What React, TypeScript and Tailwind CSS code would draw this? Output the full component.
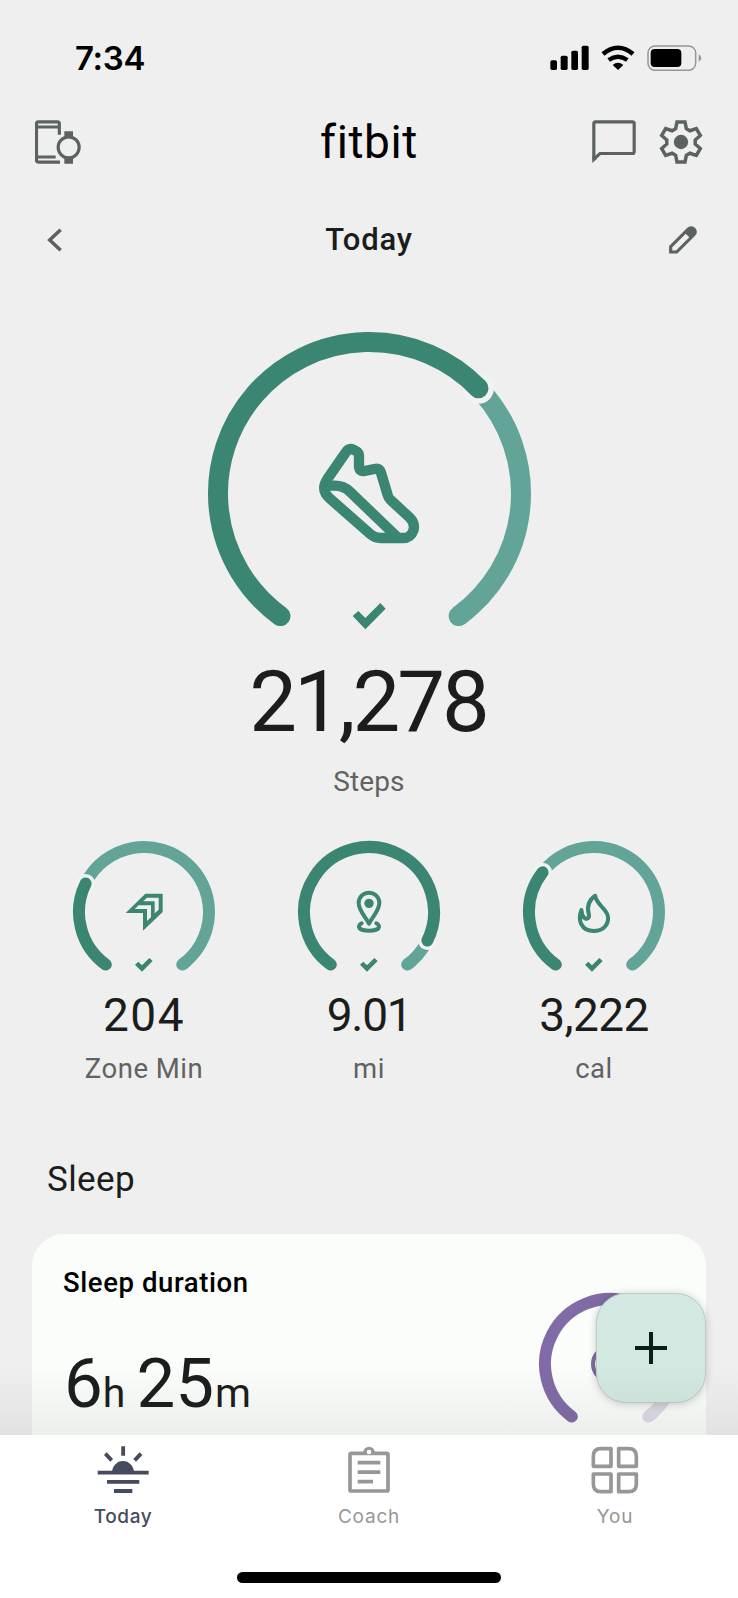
import type { ReactNode } from 'react';
import { clsx } from 'clsx';

const GREEN = '#3b8573';
const GREEN_LIGHT = '#62a598';

interface GaugeProps {
  size: number;
  height: number;
  stroke: number;
  gap: number;
  end: number;
  color?: string;
  track?: string;
  bg?: string;
  children?: ReactNode;
}

// angle in degrees, clockwise from the top
function point(c: number, r: number, angle: number) {
  const a = (angle * Math.PI) / 180;
  return { x: c + r * Math.sin(a), y: c - r * Math.cos(a) };
}

function arc(c: number, r: number, from: number, to: number) {
  const p = point(c, r, from);
  const q = point(c, r, to);
  return `M${p.x} ${p.y}A${r} ${r} 0 ${to - from > 180 ? 1 : 0} 1 ${q.x} ${q.y}`;
}

function Gauge({ size, height, stroke, gap, end, color = GREEN, track = GREEN_LIGHT, bg = '#f1f2f2', children }: GaugeProps) {
  const c = size / 2;
  const r = c - 1 - stroke / 2;
  const tip = point(c, r, end);
  return (
    <svg width={size} height={height} viewBox={`0 0 ${size} ${height}`} fill="none" className="shrink-0">
      <path d={arc(c, r, end + 2, 144)} stroke={track} strokeWidth={stroke} />
      <path d={arc(c, r, 140, 144)} stroke={track} strokeWidth={stroke} strokeLinecap="round" />
      <circle cx={tip.x} cy={tip.y} r={stroke / 2 + gap} fill={bg} />
      <path d={arc(c, r, -144, end)} stroke={color} strokeWidth={stroke} strokeLinecap="round" />
      {children}
    </svg>
  );
}

function ShoeIcon() {
  return (
    <g transform="translate(-17 -12) scale(.33333)" stroke={GREEN} strokeWidth="31" strokeLinejoin="round">
      <path d="M412 480L466 402Q476 386 490 392L498 396Q507 401 507 412V440Q507 459 524 456L553 450Q568 447 573 461L593 528Q595 537 602 543L658 595C685 621 668 657 640 657H572Q555 657 542 646L420 539C400 521 397 503 412 480Z" />
      <path d="M404 500H434Q461 500 480 518L622 655" />
      <path d="M488 891L505 876L526 897L571 852L587 869L526 931Z" fill={GREEN} stroke="none" />
    </g>
  );
}

function ZoneIcon() {
  return (
    <g transform="translate(-22 -20) scale(.33333)" fill={GREEN}>
      <path fillRule="evenodd" d="M227 279L286 221H338V276L279 332V279ZM280 244H314V280L326 269V233H291ZM254 267H291V303L303 292V256H266Z" />
    </g>
  );
}

function PinIcon() {
  return (
    <g transform="translate(-247 -20) scale(.33333)" stroke={GREEN} strokeWidth="12" strokeLinecap="round" strokeLinejoin="round">
      <path d="M957 311C948 292 926 272 926 249A31 31 0 0 1 988 249C988 272 966 292 957 311Z" />
      <path d="M935 310C919 319 926 332 957 332C988 332 995 319 979 310" />
      <circle cx="957" cy="250" r="14" fill={GREEN} stroke="none" />
    </g>
  );
}

function FlameIcon() {
  return (
    <g transform="translate(-152.2 -20) scale(.33333)" stroke={GREEN} strokeWidth="12" strokeLinejoin="round">
      <path d="M676 227C656 241 651 260 657 283C660 294 651 300 644 294C637 288 635 278 635 270C623 300 634 333 672 333C700 333 715 315 715 294C715 266 681 258 676 227Z" />
    </g>
  );
}

function CheckMark() {
  return (
    <g transform="translate(-22 -20) scale(.33333)">
      <path d="M255 434L265 425L276 436L298 414L308 423L276 455Z" fill={GREEN} />
    </g>
  );
}

function DevicesIcon() {
  return (
    <svg width="46" height="44" viewBox="106 299 138 132" fill="none" stroke="#5b625f" strokeWidth="9.5">
      <path d="M179 343V310Q179 304.500 173 304.500H116Q110.500 304.500 110.500 310V420Q110.500 425.500 116 425.500H181M111 320H179M111 410H168" />
      <circle cx="207" cy="381" r="41" fill="#efefef" stroke="none" />
      <circle cx="207" cy="381" r="31.500" />
      <path d="M194 333H220V352H194ZM194 410H220V430H194Z" fill="#5b625f" stroke="none" />
    </svg>
  );
}

function ChatIcon() {
  return (
    <svg width="44" height="44" viewBox="671 299 132 132" fill="none" stroke="#5b625f" strokeWidth="9.5">
      <path d="M676.500 418V310Q676.500 304.500 682 304.500H792Q797.500 304.500 797.500 310V394Q797.500 399.500 792 399.500H695L677 416" />
      <path d="M672 405V428L686 415Z" fill="#5b625f" stroke="none" />
    </svg>
  );
}

function GearIcon() {
  const tooth = [[-16, -40], [-12, -60], [12, -60], [16, -40]];
  const points = [0, 60, 120, 180, 240, 300].flatMap((deg) => {
    const a = (deg * Math.PI) / 180;
    return tooth.map(([x, y]) => `${x * Math.cos(a) - y * Math.sin(a)},${x * Math.sin(a) + y * Math.cos(a)}`);
  });
  return (
    <svg width="44" height="44" viewBox="-66 -66 132 132" fill="none">
      <polygon points={points.join(' ')} stroke="#5b625f" strokeWidth="10.5" />
      <circle r="21.5" fill="#5b625f" />
    </svg>
  );
}

function StatusIcons() {
  return (
    <div className="flex items-center">
      <svg width="39" height="26" viewBox="548 76 117 78">
        <rect x="549" y="122" width="20" height="29" rx="5" />
        <rect x="580" y="108" width="21" height="43" rx="5" />
        <rect x="612" y="93" width="20" height="58" rx="5" />
        <rect x="643" y="78" width="21" height="73" rx="5" />
      </svg>
      <svg width="34" height="26" viewBox="700 76 102 78" className="ml-[11.500px]" fill="none" stroke="#000" strokeWidth="13.5">
        <path d="M706 103Q727 84 751 84Q775 84 796 103" />
        <path d="M723 121Q751 102 779 121" />
        <path d="M751 151L735 136Q751 122 767 136Z" fill="#000" stroke="none" />
      </svg>
      <svg width="55" height="26" viewBox="838 75 165 78" className="ml-[12px]">
        <rect x="841" y="78" width="143" height="73" rx="21" fill="none" stroke="#979797" strokeWidth="4.500" />
        <rect x="849" y="87" width="92" height="54" rx="12" />
        <path d="M993 103Q1001 108 1001 114Q1001 120 993 125Z" fill="#979797" />
      </svg>
    </div>
  );
}

const metrics = [
  { value: '204', label: 'Zone Min', end: -64, icon: <ZoneIcon />, tracking: 'tracking-[1.5px]' },
  { value: '9.01', label: 'mi', end: 116, icon: <PinIcon />, tracking: 'tracking-[-1.3px]' },
  { value: '3,222', label: 'cal', end: -52.4, icon: <FlameIcon />, tracking: 'tracking-[-0.6px]' },
];

const tabs = [
  {
    label: 'Today',
    active: true,
    icon: (
      <svg width="52" height="48" viewBox="109 46 156 144" fill="none" stroke="#454b5c" strokeWidth="11.500">
        <path d="M187.500 47V75M134 69L153 89M241 69L222 89M111 126H264M139 153.500H236M160 181H215" />
        <path d="M154 126A33 35 0 0 1 220 126Z" fill="#454b5c" stroke="none" />
      </svg>
    ),
  },
  {
    label: 'Coach',
    active: false,
    icon: (
      <svg width="44" height="48" viewBox="860 46 132 144" fill="none" stroke="#979797" strokeWidth="11">
        <rect x="869" y="68" width="114" height="113" rx="4" />
        <path d="M892 96H960M892 124.500H960M892 153H938" />
        <path d="M909 65A17 17 0 0 1 943 65V72H909Z" fill="#979797" stroke="none" />
        <circle cx="926" cy="64" r="7" fill="#fff" stroke="none" />
      </svg>
    ),
  },
  {
    label: 'You',
    active: false,
    icon: (
      <svg width="48" height="48" viewBox="573 51 144 144" fill="none" stroke="#979797" strokeWidth="11" strokeLinejoin="round">
        <path d="M633 59V112H580V82Q580 59 603 59Z" />
        <path d="M656 59V112H709V82Q709 59 686 59Z" />
        <path d="M633 188V135H580V165Q580 188 603 188Z" />
        <path d="M656 188V135H709V165Q709 188 686 188Z" />
      </svg>
    ),
  },
];

export default function App() {
  return (
    <div className="relative flex h-[1598px] w-[738px] flex-col overflow-hidden bg-[#efefef] font-['Roboto',sans-serif] text-[#1b1d1c]">
      <header>
        <div className="mt-[38px] flex h-10 items-center justify-between pr-[36.500px] pl-[75px]">
          <span className="font-['Inter',sans-serif] text-[33px] leading-10 font-semibold tracking-[-0.3px] text-black">7:34</span>
          <StatusIcons />
        </div>
        <div className="mt-[38px] grid h-[52px] grid-cols-[1fr_auto_1fr] items-center px-[35px]">
          <DevicesIcon />
          <h1 className="text-[46px] leading-[52px] font-normal tracking-[0.6px] text-black">fitbit</h1>
          <div className="flex justify-end gap-[23px]">
            <ChatIcon />
            <GearIcon />
          </div>
        </div>
        <div className="mt-[52px] grid h-10 grid-cols-[1fr_auto_1fr] items-center px-10">
          <svg width="15" height="24" viewBox="144 624 45 72" fill="none" stroke="#5b625f" strokeWidth="10.5" className="ml-[7px]">
            <path d="M185 629L152 660L185 691" />
          </svg>
          <h2 className="text-[31px] leading-10 font-medium tracking-[0.8px]">Today</h2>
          <svg width="30" height="30" viewBox="901 617 90 90" fill="none" stroke="#5b625f" strokeWidth="9.5" className="justify-self-end">
            <path d="M909 698V682L962 629Q972 622 980 630Q986 639 978 647L927 698Z" />
            <path d="M951 640L962 629Q972 622 980 630Q986 639 978 647L968 657Z" fill="#5b625f" stroke="none" />
          </svg>
        </div>
      </header>

      <section className="mt-[71px] flex flex-col items-center">
        <Gauge size={325} height={300} stroke={20} gap={5.5} end={46}>
          <ShoeIcon />
        </Gauge>
        <div className="mt-[25.500px] ml-[-2px] h-[90px] text-[85px] leading-[90px] tracking-[-3px]">21,278</div>
        <div className="mt-[15px] h-10 text-[28px] leading-10 tracking-[0.1px] text-[#5f6361]">Steps</div>
      </section>

      <section className="mt-[38.500px] grid grid-cols-3 px-[31.500px]">
        {metrics.map((m) => (
          <div key={m.label} className="flex flex-col items-center">
            <Gauge size={144} height={134} stroke={12} gap={3.5} end={m.end}>
              {m.icon}
              <CheckMark />
            </Gauge>
            <div className={clsx('mt-4 h-[50px] text-[46px] leading-[50px]', m.tracking)}>{m.value}</div>
            <div className="mt-[11.500px] h-[34px] text-[27.500px] leading-[34px] tracking-[0.5px] text-[#5f6361]">{m.label}</div>
          </div>
        ))}
      </section>

      <h3 className="mt-[74px] ml-[47px] h-10 text-[35px] leading-10 tracking-[0.4px]">Sleep</h3>

      <section className="mx-8 mt-[34px] flex h-[201px] shrink-0 justify-between rounded-t-[32px] bg-[#fbfdfa] pl-8">
        <div>
          <div className="mt-[33px] ml-[-1px] text-[27.500px] leading-8 font-medium tracking-[0.6px] text-black">Sleep duration</div>
          <div className="mt-[50px] flex items-baseline leading-[70px]">
            <span className="text-[69px]">6</span>
            <span className="text-[41px]">h</span>
            <span className="ml-[11px] text-[69px]">25</span>
            <span className="ml-[1px] text-[41px]">m</span>
          </div>
        </div>
        <div className="mt-[58px] mr-[24px]">
          <Gauge size={144} height={134} stroke={12} gap={3.5} end={100} color="#816ba6" track="#dddbe4" bg="#fbfdfa">
            <circle cx="72" cy="72" r="17" stroke="#816ba6" strokeWidth="4" />
          </Gauge>
        </div>
      </section>

      <nav className="relative z-10 h-[163px] shrink-0 bg-white">
        <div className="grid grid-cols-3 pt-[11.500px]">
          {tabs.map((tab) => (
            <div key={tab.label} className="flex flex-col items-center">
              {tab.icon}
              <span
                className={clsx(
                  "mt-[11px] font-['Inter',sans-serif] text-[19px] leading-6",
                  tab.active ? 'font-medium tracking-[0.6px] text-[#454b5c]' : 'tracking-[0.8px] text-[#979797]',
                )}
              >
                {tab.label}
              </span>
            </div>
          ))}
        </div>
        <div className="mx-auto mt-[42.500px] h-[11px] w-[264px] rounded-full bg-black" />
      </nav>

      {/* floating add button */}
      <button className="absolute top-[1293px] left-[596px] flex h-[110px] w-[110px] items-center justify-center rounded-[30px] border border-[#b9cdc5] bg-[#d2e8e0] shadow-[0_1px_8px_rgba(0,0,0,0.2)]">
        <svg width="32" height="32" viewBox="0 0 32 32" stroke="#0b1f1a" strokeWidth="4">
          <path d="M16 0V32M0 16H32" />
        </svg>
      </button>

      {/* fade above the tab bar */}
      <div className="absolute top-[1365px] left-0 h-[70px] w-full bg-linear-to-b from-transparent to-[#30403813]" />
    </div>
  );
}
